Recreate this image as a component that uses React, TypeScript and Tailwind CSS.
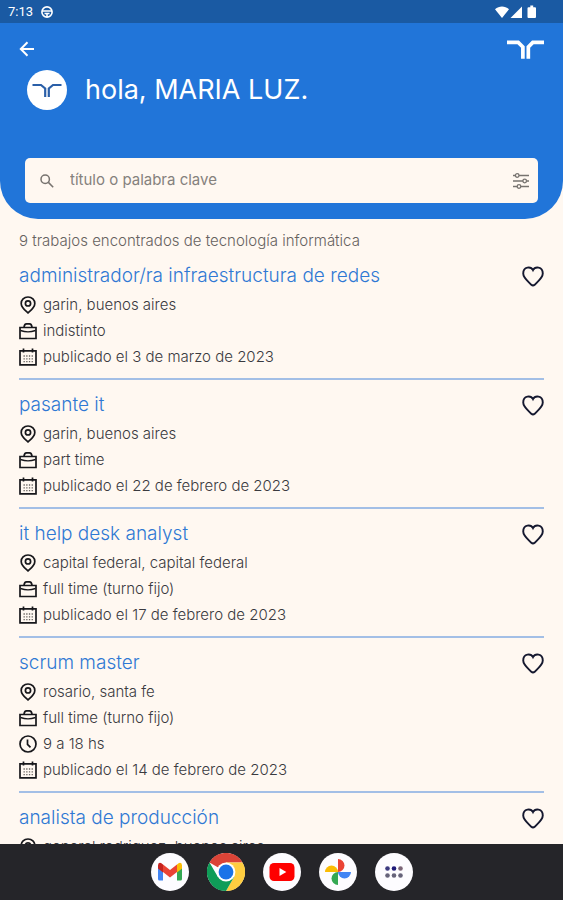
import type { ReactNode } from "react";

type DetailIcon = "pin" | "bag" | "clock" | "calendar";

type Job = {
  title: string;
  details: { icon: DetailIcon; text: string }[];
};

const jobs: Job[] = [
  {
    title: "administrador/ra infraestructura de redes",
    details: [
      { icon: "pin", text: "garin, buenos aires" },
      { icon: "bag", text: "indistinto" },
      { icon: "calendar", text: "publicado el 3 de marzo de 2023" },
    ],
  },
  {
    title: "pasante it",
    details: [
      { icon: "pin", text: "garin, buenos aires" },
      { icon: "bag", text: "part time" },
      { icon: "calendar", text: "publicado el 22 de febrero de 2023" },
    ],
  },
  {
    title: "it help desk analyst",
    details: [
      { icon: "pin", text: "capital federal, capital federal" },
      { icon: "bag", text: "full time (turno fijo)" },
      { icon: "calendar", text: "publicado el 17 de febrero de 2023" },
    ],
  },
  {
    title: "scrum master",
    details: [
      { icon: "pin", text: "rosario, santa fe" },
      { icon: "bag", text: "full time (turno fijo)" },
      { icon: "clock", text: "9 a 18 hs" },
      { icon: "calendar", text: "publicado el 14 de febrero de 2023" },
    ],
  },
  {
    title: "analista de producción",
    details: [{ icon: "pin", text: "general rodriguez, buenos aires" }],
  },
];

const detailPaths: Record<DetailIcon, ReactNode> = {
  pin: (
    <>
      <path d="M9 1C5 1 2.2 3.8 2.2 7.4c0 4 4 7 6.800 9.600 2.800-2.600 6.800-5.600 6.800-9.600C15.800 3.800 13 1 9 1z" />
      <circle cx="9" cy="7.400" r="2.600" />
    </>
  ),
  bag: (
    <>
      <path d="M1 5.500h16v11H1z" />
      <path d="M5 5.300C5.200 3 6.200 1.800 7.500 1.800h3c1.300 0 2.300 1.200 2.500 3.500" />
      <path d="M1.500 8.500c4.500 1.600 10.500 1.600 15 0" strokeWidth="1.400" />
    </>
  ),
  clock: (
    <>
      <circle cx="9" cy="9" r="8" />
      <path d="M8.500 4.500v4.800l3 3" />
    </>
  ),
  calendar: (
    <>
      <path d="M1 2.800h16v14H1zM4.500 .5v4M13.500 .5v4" />
      <path d="M4.500 8H14M4.500 10.800H14M4.500 13.600H14" stroke="#66625f" strokeWidth="1.300" strokeDasharray="1.300 1.400" />
    </>
  ),
};

function Detail({ icon, text }: { icon: DetailIcon; text: string }) {
  return (
    <li className="flex h-[26px] items-center gap-1.5">
      <svg viewBox="0 0 18 18" className="size-[18px] shrink-0" fill="none" stroke="#17171b" strokeWidth="1.700">
        {detailPaths[icon]}
      </svg>
      <span className="text-[15px] font-light whitespace-nowrap text-[#3a3a3f]">{text}</span>
    </li>
  );
}

function BrandMark({ className }: { className: string }) {
  return (
    <svg viewBox="0 0 38 19" className={className} fill="none" stroke="currentColor" strokeWidth="3.800">
      <path d="M0 2.200h11.500L16.300 7v12" />
      <path d="M38 2.200H26.500L21.900 7v12" />
    </svg>
  );
}

function StatusBar() {
  return (
    <div className="flex h-[23px] shrink-0 items-center justify-between bg-[#1a5aa3] pr-[26px] pl-2 text-white">
      <div className="flex items-center gap-2 font-[Roboto,sans-serif] text-[13px]">
        <span>7:13</span>
        <svg viewBox="0 0 12 12" className="size-3" fill="none" stroke="currentColor" strokeWidth="1.600">
          <circle cx="6" cy="6" r="5.100" />
          <path d="M1 5h10M3.500 7.500h5M6 7.500V11" />
        </svg>
      </div>
      <svg viewBox="0 0 42 14" className="h-[14px] w-[42px]" fill="currentColor">
        <path d="M0 4.200C4.200 .6 9.800 .6 14 4.200L7 13z" />
        <path d="M15.500 13L27 1.500V13z" />
        <path d="M33.500 2.200h1.800V.6h2.900v1.600H40q1 0 1 1V12q0 1-1 1h-6.500q-1 0-1-1V3.200q0-1 1-1z" />
      </svg>
    </div>
  );
}

function Header() {
  return (
    <header className="shrink-0 rounded-b-[38px] bg-[#2175d9] pb-4 text-white">
      <div className="flex h-9 items-end justify-between px-[19px]">
        <a href="#volver" aria-label="volver">
          <svg viewBox="0 0 16 16" className="mb-0.5 size-4" fill="none" stroke="currentColor" strokeWidth="2">
            <path d="M15 8H2M8.500 1.300L1.800 8l6.700 6.700" />
          </svg>
        </a>
        <BrandMark className="h-[19px] w-[37px]" />
      </div>
      <div className="mt-[11px] flex items-center gap-[18px] px-[27px]">
        <div className="flex size-10 shrink-0 items-center justify-center rounded-full bg-white text-[#2a5fa8]">
          <svg viewBox="0 0 30 14" className="h-[14px] w-[30px]" fill="none" stroke="currentColor" strokeWidth="2.200">
            <path d="M.5 2H9l4.200 3.500V14M29.500 2H21l-4.200 3.500V14" />
          </svg>
        </div>
        <h1 className="text-[27px] leading-10">hola, MARIA LUZ.</h1>
      </div>
      <form className="mx-[25px] mt-12 flex h-[45px] items-center rounded-[5px] bg-[#fff8f1] pr-2 pl-[15px] text-[#77736f]">
        <svg viewBox="0 0 14 14" className="size-[14px] shrink-0" fill="none" stroke="currentColor" strokeWidth="1.500">
          <circle cx="5.200" cy="5.200" r="4.200" />
          <path d="M8.400 8.400l4.800 4.800" />
        </svg>
        <input
          type="text"
          aria-label="título o palabra clave"
          placeholder="título o palabra clave"
          className="ml-4 min-w-0 flex-1 bg-transparent text-[15px] outline-none placeholder:text-[#85817d]"
        />
        <button type="button" aria-label="filtros">
          <svg viewBox="0 0 18 18" className="size-[18px]" fill="none" stroke="currentColor" strokeWidth="1.300">
            <path d="M1 3.500h2.500M7 3.500h10M1 9h10M14.500 9H17M1 14.500h4M9 14.500h8" />
            <circle cx="5.200" cy="3.500" r="1.800" />
            <circle cx="12.700" cy="9" r="1.800" />
            <circle cx="7" cy="14.500" r="1.800" />
          </svg>
        </button>
      </form>
    </header>
  );
}

function JobItem({ job }: { job: Job }) {
  return (
    <li className="flex items-start justify-between border-b-2 border-[#a3bfe6] pt-3 pb-2">
      <div>
        <h2 className="text-[19px] leading-[26px] font-light whitespace-nowrap text-[#2f78d4]">{job.title}</h2>
        <ul className="mt-[3px]">
          {job.details.map((detail) => (
            <Detail key={detail.text} icon={detail.icon} text={detail.text} />
          ))}
        </ul>
      </div>
      <button type="button" aria-label="guardar" className="mt-[3px]">
        <svg viewBox="0 0 24 23" className="h-[21px] w-[22px]" fill="none" stroke="#15182f" strokeWidth="2.100">
          <path d="M12 4.500C9.800 .3 1.300.2 1.300 8.200c0 5 5.700 8.800 8.900 12.400q1.800 1.700 3.600 0c3.200-3.600 8.900-7.400 8.900-12.400C22.700.2 14.200.3 12 4.500z" />
        </svg>
      </button>
    </li>
  );
}

const apps: { label: string; icon: ReactNode }[] = [
  {
    label: "Gmail",
    icon: (
      <>
        <path fill="#4285f4" d="M7 12v14q0 1.500 1.500 1.500H12V15z" />
        <path fill="#34a853" d="M26 15v12.500h3.500q1.500 0 1.500-1.500V12z" />
        <path fill="#fbbc04" d="M26 11.500l2-1.500q3-1 3 2.500v3l-5 4z" />
        <path fill="#c5221f" d="M7 15.500v-3q0-3.500 3-2.500l2 1.500v8z" />
        <path fill="#ea4335" d="M12 11.500l7 5.500 7-5.500v7.500l-7 5.500-7-5.500z" />
      </>
    ),
  },
  {
    label: "Chrome",
    icon: (
      <>
        <path fill="#db4437" d="M19 19L2.500 9.500A19 19 0 0 1 35.500 9.500H19z" />
        <path fill="#ffcd40" d="M19 9.500h16.500A19 19 0 0 1 19 38l8.200-14.200z" />
        <path fill="#0f9d58" d="M2.500 9.500A19 19 0 0 0 19 38l8.200-14.200H10.800z" />
        <circle cx="19" cy="19" r="9.400" fill="#fff" />
        <circle cx="19" cy="19" r="7.400" fill="#1a73e8" />
      </>
    ),
  },
  {
    label: "YouTube",
    icon: (
      <>
        <rect x="6.500" y="10" width="25" height="18" rx="4.500" fill="#f00" />
        <path d="M16.500 15v8l6.800-4z" fill="#fff" />
      </>
    ),
  },
  {
    label: "Fotos",
    icon: (
      <>
        <path fill="#ea4335" d="M19 6a6.500 6.500 0 0 1 0 13z" />
        <path fill="#4285f4" d="M32 19a6.500 6.500 0 0 1-13 0z" />
        <path fill="#34a853" d="M19 32a6.500 6.500 0 0 1 0-13z" />
        <path fill="#fbbc04" d="M6 19a6.500 6.500 0 0 1 13 0z" />
      </>
    ),
  },
  {
    label: "Aplicaciones",
    icon: (
      <>
        <circle cx="12.500" cy="15.500" r="2.300" fill="#3c3a80" />
        <circle cx="19" cy="15.500" r="2.300" fill="#1f1a78" />
        <circle cx="25.500" cy="15.500" r="2.300" fill="#7c6678" />
        <circle cx="12.500" cy="22.500" r="2.300" fill="#66637a" />
        <circle cx="19" cy="22.500" r="2.300" fill="#66637a" />
        <circle cx="25.500" cy="22.500" r="2.300" fill="#66637a" />
      </>
    ),
  },
];

function Dock() {
  return (
    <nav className="flex h-14 shrink-0 items-center justify-center gap-[18px] bg-[#252529]">
      {apps.map((app) => (
        <button key={app.label} type="button" aria-label={app.label} className="size-[38px] rounded-full bg-[#fdfcff]">
          <svg viewBox="0 0 38 38" className="size-full">
            {app.icon}
          </svg>
        </button>
      ))}
    </nav>
  );
}

export default function App() {
  return (
    <div className="flex h-screen flex-col bg-[#fff8f1] font-[Inter,sans-serif]">
      <StatusBar />
      <Header />
      <main className="min-h-0 flex-1 overflow-hidden px-[19px] pt-3">
        <p className="text-[15px] leading-5 font-light text-[#66625f]">
          9 trabajos encontrados de tecnología informática
        </p>
        <ul>
          {jobs.map((job) => (
            <JobItem key={job.title} job={job} />
          ))}
        </ul>
      </main>
      <Dock />
    </div>
  );
}
